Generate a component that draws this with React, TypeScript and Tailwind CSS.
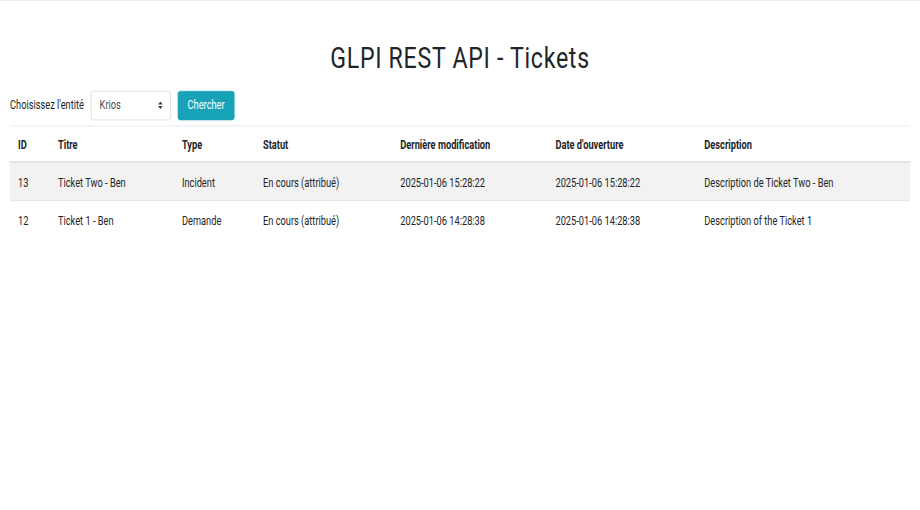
import React from "react";

type Ticket = {
  id: number;
  titre: string;
  type: string;
  statut: string;
  modif: string;
  ouverture: string;
  description: string;
};

const tickets: Ticket[] = [
  {
    id: 13,
    titre: "Ticket Two - Ben",
    type: "Incident",
    statut: "En cours (attribué)",
    modif: "2025-01-06 15:28:22",
    ouverture: "2025-01-06 15:28:22",
    description: "Description de Ticket Two - Ben",
  },
  {
    id: 12,
    titre: "Ticket 1 - Ben",
    type: "Demande",
    statut: "En cours (attribué)",
    modif: "2025-01-06 14:28:38",
    ouverture: "2025-01-06 14:28:38",
    description: "Description of the Ticket 1",
  },
];

const headers = ["ID", "Titre", "Type", "Statut", "Dernière modification", "Date d'ouverture", "Description"];

function SortArrows() {
  return (
    <svg
      width="8"
      height="10"
      viewBox="0 0 4 5"
      className="pointer-events-none absolute right-[14px] top-1/2 -translate-y-1/2"
    >
      <path fill="#343a40" d="M2 0L0 2h4zm0 5L0 3h4z" />
    </svg>
  );
}

export default function App() {
  return (
    <div className="h-[510px] w-[920px] overflow-hidden border-t border-[#ececec] bg-white">
      {/* condensed page: laid out wide, then squeezed horizontally into the window */}
      <div className="w-[1589px] origin-top-left scale-x-[0.579] scale-y-[0.755] px-[17.3px] font-['Roboto',sans-serif] text-[16px] leading-[1.5] text-[#212529]">
        <h1 className="mb-[19px] pt-[52px] text-center text-[40px] font-normal leading-[1.2] tracking-[1.2px]">
          GLPI REST API - Tickets
        </h1>

        <form className="mb-[7px] flex items-center" onSubmit={(e) => e.preventDefault()}>
          <label className="mr-[12px]">Choisissez l'entité</label>
          <div className="relative mr-[12px]">
            <select
              defaultValue="krios"
              className="h-[38.5px] w-[138px] appearance-none rounded-[4px] border border-[#ced4da] bg-white pl-[14px] pr-[30px] text-[16px] text-[#495057] outline-none"
            >
              <option value="krios">Krios</option>
            </select>
            <SortArrows />
          </div>
          <button
            type="submit"
            className="flex h-[38.5px] w-[98px] items-center justify-center rounded-[4px] border border-[#17a2b8] bg-[#17a2b8] text-[16px] text-white"
          >
            Chercher
          </button>
        </form>

        <table className="w-full table-fixed border-collapse text-left">
          <colgroup>
            <col className="w-[69px]" />
            <col className="w-[214px]" />
            <col className="w-[140px]" />
            <col className="w-[237px]" />
            <col className="w-[268px]" />
            <col className="w-[257px]" />
            <col className="w-[369px]" />
          </colgroup>
          <thead>
            <tr>
              {headers.map((h) => (
                <th
                  key={h}
                  className="border-b-2 border-t border-[#dee2e6] px-[13.8px] pb-[8.5px] pt-[13.5px] align-bottom font-bold"
                >
                  {h}
                </th>
              ))}
            </tr>
          </thead>
          <tbody>
            {tickets.map((t, i) => (
              <tr key={t.id} className={i % 2 === 0 ? "bg-[#f2f2f2]" : ""}>
                {[t.id, t.titre, t.type, t.statut, t.modif, t.ouverture, t.description].map((v, j) => (
                  <td key={j} className="border-t border-[#dee2e6] px-[13.8px] pb-[11.5px] pt-[15px]">
                    {v}
                  </td>
                ))}
              </tr>
            ))}
          </tbody>
        </table>
      </div>
    </div>
  );
}
